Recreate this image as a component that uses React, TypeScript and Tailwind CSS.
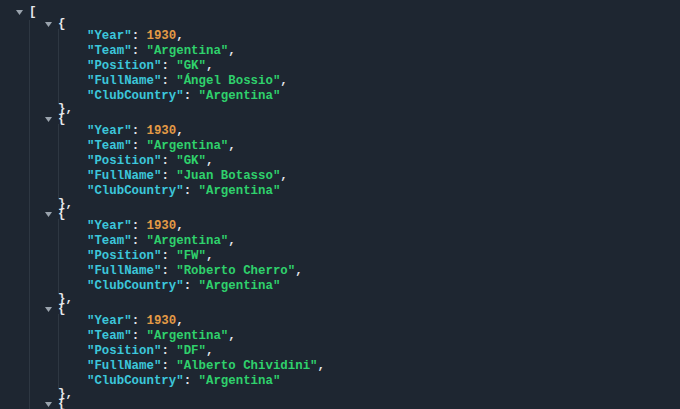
const players = [
  { Year: 1930, Team: "Argentina", Position: "GK", FullName: "Ángel Bossio", ClubCountry: "Argentina" },
  { Year: 1930, Team: "Argentina", Position: "GK", FullName: "Juan Botasso", ClubCountry: "Argentina" },
  { Year: 1930, Team: "Argentina", Position: "FW", FullName: "Roberto Cherro", ClubCountry: "Argentina" },
  { Year: 1930, Team: "Argentina", Position: "DF", FullName: "Alberto Chividini", ClubCountry: "Argentina" },
];

function Caret() {
  return (
    <svg width="7" height="5" viewBox="0 0 7 5" className="text-[#9aa3ad]">
      <path d="M0 0h7L3.5 5z" fill="currentColor" />
    </svg>
  );
}

function Slot({ caret }: { caret?: boolean }) {
  return (
    <div className="w-[29px] shrink-0 flex justify-end pr-[6px] items-center">
      {caret && <Caret />}
    </div>
  );
}

function OpenRow() {
  return (
    <div className="flex items-center h-[9px] -ml-px">
      <Slot caret />
      <span className="leading-[9px]">{"{"}</span>
    </div>
  );
}

export default function App() {
  return (
    <div
      className="w-[680px] h-[409px] overflow-hidden bg-[#1e2631] text-[#e6e8eb] font-bold text-[12.4px] pt-[5px]"
      style={{ fontFamily: '"Liberation Mono", "DejaVu Sans Mono", monospace' }}
    >
      <div className="flex items-center h-[15px]">
        <Slot caret />
        <span>[</span>
      </div>
      <div className="ml-[29px] border-l border-[#2e3742]">
        {players.map((p, i) => {
          const entries = Object.entries(p);
          return (
            <div key={i}>
              <OpenRow />
              <div className="ml-[28px] border-l border-[#2e3742] pl-[28px]">
                {entries.map(([k, v], j) => (
                  <div key={k} className="h-[15px] flex items-center whitespace-pre">
                    <span className="text-[#3cc6db]">"{k}"</span>
                    <span>: </span>
                    {typeof v === "number" ? (
                      <span className="text-[#e39a45]">{v}</span>
                    ) : (
                      <span className="text-[#2fd16c]">"{v}"</span>
                    )}
                    {j < entries.length - 1 && <span>,</span>}
                  </div>
                ))}
              </div>
              <div className="flex items-center h-[11px] pl-[28px]">
                <span className="leading-[9px]">{"},"}</span>
              </div>
            </div>
          );
        })}
        <OpenRow />
      </div>
    </div>
  );
}
